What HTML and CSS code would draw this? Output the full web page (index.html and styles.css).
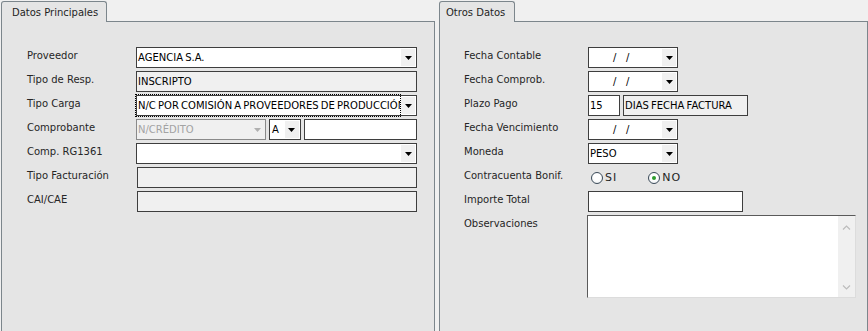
FILE: index.html
```html
<!DOCTYPE html>
<html lang="es">
<head>
  <meta charset="UTF-8" />
  <title>Comprobante</title>
  <link rel="stylesheet" href="styles.css">
</head>
<body>
  <div class="screen">
    <section class="panel panel-main">
      <div class="tab">Datos Principales</div>
      <div class="panel-body">
        <div class="form form-main">
          <span class="lbl">Proveedor</span>
          <div class="combo">
            <span class="value">AGENCIA S.A.</span>
            <span class="drop"><svg width="7" height="4" viewBox="0 0 7 4"><path d="M0 0h7L3.5 4z"/></svg></span>
          </div>

          <span class="lbl">Tipo de Resp.</span>
          <div class="box box-off"><span class="value">INSCRIPTO</span></div>

          <span class="lbl">Tipo Carga</span>
          <div class="combo combo-focus">
            <span class="value">N/C POR COMISIÓN A PROVEEDORES DE PRODUCCIÓN</span>
            <span class="drop"><svg width="7" height="4" viewBox="0 0 7 4"><path d="M0 0h7L3.5 4z"/></svg></span>
          </div>

          <span class="lbl">Comprobante</span>
          <div class="group">
            <div class="combo combo-off w-tipo">
              <span class="value">N/CRÉDITO</span>
              <span class="drop"><svg width="7" height="4" viewBox="0 0 7 4"><path d="M0 0h7L3.5 4z"/></svg></span>
            </div>
            <div class="combo w-letra">
              <span class="value">A</span>
              <span class="drop"><svg width="7" height="4" viewBox="0 0 7 4"><path d="M0 0h7L3.5 4z"/></svg></span>
            </div>
            <div class="box w-numero"></div>
          </div>

          <span class="lbl">Comp. RG1361</span>
          <div class="combo">
            <span class="value"></span>
            <span class="drop"><svg width="7" height="4" viewBox="0 0 7 4"><path d="M0 0h7L3.5 4z"/></svg></span>
          </div>

          <span class="lbl">Tipo Facturación</span>
          <div class="box box-off shift"></div>

          <span class="lbl">CAI/CAE</span>
          <div class="box box-off shift"></div>
        </div>
      </div>
    </section>

    <section class="panel panel-other">
      <div class="tab">Otros Datos</div>
      <div class="panel-body">
        <div class="form form-other">
          <span class="lbl">Fecha Contable</span>
          <div class="combo w-fecha">
            <span class="value fecha">/&nbsp;&nbsp;&nbsp;/</span>
            <span class="drop"><svg width="7" height="4" viewBox="0 0 7 4"><path d="M0 0h7L3.5 4z"/></svg></span>
          </div>

          <span class="lbl">Fecha Comprob.</span>
          <div class="combo w-fecha">
            <span class="value fecha">/&nbsp;&nbsp;&nbsp;/</span>
            <span class="drop"><svg width="7" height="4" viewBox="0 0 7 4"><path d="M0 0h7L3.5 4z"/></svg></span>
          </div>

          <span class="lbl">Plazo Pago</span>
          <div class="group">
            <div class="box w-dias"><span class="value">15</span></div>
            <div class="box box-off w-plazo"><span class="value">DIAS FECHA FACTURA</span></div>
          </div>

          <span class="lbl">Fecha Vencimiento</span>
          <div class="combo w-fecha">
            <span class="value fecha">/&nbsp;&nbsp;&nbsp;/</span>
            <span class="drop"><svg width="7" height="4" viewBox="0 0 7 4"><path d="M0 0h7L3.5 4z"/></svg></span>
          </div>

          <span class="lbl">Moneda</span>
          <div class="combo w-fecha">
            <span class="value">PESO</span>
            <span class="drop"><svg width="7" height="4" viewBox="0 0 7 4"><path d="M0 0h7L3.5 4z"/></svg></span>
          </div>

          <span class="lbl">Contracuenta Bonif.</span>
          <div class="radios">
            <span class="opt"><span class="radio"></span>SI</span>
            <span class="opt"><span class="radio checked"></span>NO</span>
          </div>

          <span class="lbl">Importe Total</span>
          <div class="box w-importe"></div>

          <span class="lbl">Observaciones</span>
          <div class="memo">
            <div class="memo-text"></div>
            <div class="scroll">
              <svg width="9" height="5" viewBox="0 0 9 5"><path d="M1 4.5L4.5 1L8 4.5" fill="none" stroke="#bcbcbc" stroke-width="1.2"/></svg>
              <svg width="9" height="5" viewBox="0 0 9 5"><path d="M1 0.5L4.5 4L8 0.5" fill="none" stroke="#bcbcbc" stroke-width="1.2"/></svg>
            </div>
          </div>
        </div>
      </div>
    </section>
  </div>
</body>
</html>
```

FILE: styles.css
```css
html, body {
  margin: 0;
  padding: 0;
  height: 100%;
}
body {
  background-color: #f0f0f0;
  font-family: "DejaVu Sans", Verdana, sans-serif;
  font-size: 10px;
  color: #000;
  overflow: hidden;
}
.screen {
  display: flex;
  gap: 4px;
  height: 100%;
  padding: 1px 0 0 1px;
  box-sizing: border-box;
}
.panel {
  display: flex;
  flex-direction: column;
}
.panel-main {
  width: 434px;
}
.panel-other {
  width: 429px;
}
.tab {
  position: relative;
  z-index: 1;
  height: 21px;
  line-height: 20px;
  margin-bottom: -1px;
  padding: 1px 0 0 10px;
  border: 1px solid #7c868c;
  border-bottom: none;
  border-radius: 3px 3px 0 0;
  background-color: #e5e5e5;
  color: #1f1f1f;
  box-sizing: border-box;
}
.panel-main .tab {
  width: 106px;
}
.panel-other .tab {
  width: 76px;
  padding-left: 6px;
}
.panel-body {
  flex: 1;
  border: 1px solid #7c868c;
  border-bottom: none;
  background-color: #e5e5e5;
  padding-top: 25px;
}
.form {
  display: grid;
  row-gap: 3px;
  align-items: start;
}
.form-main {
  grid-template-columns: 109px 281px;
  padding-left: 25px;
}
.form-other {
  grid-template-columns: 124px 269px;
  padding-left: 24px;
}
.lbl {
  padding-top: 3px;
  line-height: 12px;
  color: #262626;
  white-space: nowrap;
}
.combo, .box {
  display: flex;
  height: 21px;
  box-sizing: border-box;
  border: 1px solid #3e3e3e;
  background-color: #fff;
}
.value {
  flex: 1;
  overflow: hidden;
  white-space: nowrap;
  line-height: 19px;
  padding-left: 1px;
  word-spacing: -1px;
}
.drop {
  width: 14px;
  margin: 1px;
  background-color: #f0f0f0;
  display: flex;
  align-items: center;
  justify-content: center;
}
.drop svg {
  fill: #000;
}
.combo-focus .value {
  outline: 1px dotted #000;
  margin: -1px 0 -1px -1px;
  padding-left: 2px;
  line-height: 21px;
}
.combo-off {
  background-color: #f0f0f0;
  border-color: #8a8a8a;
  color: #a3a3a3;
}
.combo-off .drop svg {
  fill: #b0b0b0;
}
.box-off {
  background-color: #f0f0f0;
}
.shift {
  margin-left: 1px;
}
.group {
  display: flex;
  gap: 3px;
}
.w-tipo {
  width: 131px;
}
.w-letra {
  width: 32px;
}
.w-letra .value {
  padding-left: 2px;
}
.w-numero {
  width: 114px;
}
.w-fecha {
  width: 90px;
}
.fecha {
  padding-left: 24px;
  word-spacing: 0;
}
.w-dias {
  width: 32px;
}
.w-plazo {
  width: 125px;
}
.w-importe {
  width: 155px;
}
.radios {
  display: flex;
  height: 21px;
  align-items: center;
  padding-left: 3px;
  gap: 31px;
}
.opt {
  display: flex;
  align-items: center;
  gap: 2px;
  letter-spacing: 1px;
  font-size: 11px;
  color: #1f1f1f;
}
.radio {
  width: 12px;
  height: 12px;
  box-sizing: border-box;
  border: 1px solid #3a4a58;
  border-radius: 50%;
  background: radial-gradient(circle at 50% 40%, #fff 40%, #e8ecef 100%);
  display: flex;
  align-items: center;
  justify-content: center;
}
.radio.checked::after {
  content: "";
  width: 4px;
  height: 4px;
  border-radius: 50%;
  background-color: #2e9c2e;
}
.memo {
  display: flex;
  width: 269px;
  height: 83px;
  margin-left: -1px;
  box-sizing: border-box;
  border: 1px solid;
  border-color: #5a5a5a #dcdcdc #dcdcdc #5a5a5a;
  background-color: #fff;
}
.memo-text {
  flex: 1;
}
.scroll {
  width: 17px;
  background-color: #f0f0f0;
  display: flex;
  flex-direction: column;
  justify-content: space-between;
  align-items: center;
  padding: 9px 0 7px;
}
```
